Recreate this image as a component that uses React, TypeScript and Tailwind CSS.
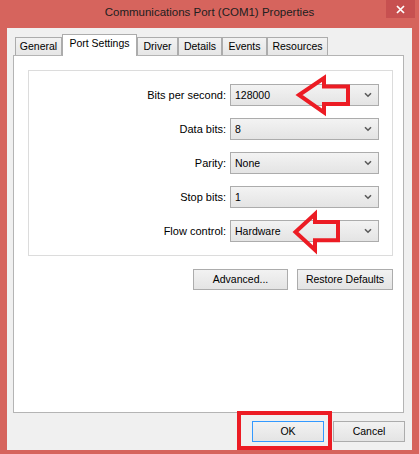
import React from "react";

function Chevron() {
  return (
    <svg width="8" height="6" viewBox="0 0 8 6" className="shrink-0">
      <polyline points="1,1.2 4,4.2 7,1.2" fill="none" stroke="#5a5a5a" strokeWidth="1.6" />
    </svg>
  );
}

function Combo({ value }: { value: string }) {
  return (
    <div className="w-[149px] h-[22px] border border-[#acacac] bg-linear-to-b from-[#f3f3f3] to-[#e4e4e4] flex items-center pl-[4px] pr-[6px] text-[10.5px] text-black">
      <span className="flex-1 leading-none">{value}</span>
      <Chevron />
    </div>
  );
}

function Row({ label, value }: { label: string; value: string }) {
  return (
    <div className="flex items-center h-[22px]">
      <div className="flex-1 text-right pr-[4px] text-[11px] text-black leading-none">{label}</div>
      <Combo value={value} />
    </div>
  );
}

const tabs = [
  { label: "General", cls: "w-[47px]" },
  { label: "Port Settings", cls: "w-[75px]", sel: true },
  { label: "Driver", cls: "w-[41px]" },
  { label: "Details", cls: "w-[44px]" },
  { label: "Events", cls: "w-[45px]" },
  { label: "Resources", cls: "w-[61px]" },
];

export default function App() {
  return (
    <div className="relative w-[419px] h-[454px] bg-[#d6645d] flex flex-col font-['Liberation_Sans',Arial,sans-serif] overflow-hidden">
      {/* Title bar */}
      <div className="relative h-[28px] shrink-0 flex items-center justify-center pb-[2px]">
        <span className="text-[11.5px] text-[#202020]">Communications Port (COM1) Properties</span>
        <div className="absolute right-[4px] top-0 w-[29px] h-[18px] bg-[#c75050] flex items-center justify-center">
          <svg width="9" height="9" viewBox="0 0 9 9">
            <path d="M1 1 L8 8 M8 1 L1 8" stroke="#ffffff" strokeWidth="1.7" />
          </svg>
        </div>
      </div>

      {/* Client area */}
      <div className="ml-[7px] w-[405px] h-[422px] bg-[#f0f0f0] pt-[6px] flex flex-col">
        {/* Tab strip */}
        <div className="ml-[8px] h-[21px] flex items-end">
          {tabs.map((t) =>
            t.sel ? (
              <div
                key={t.label}
                className={`${t.cls} h-[22px] -mb-[1px] relative z-10 bg-white border-t border-l border-r border-[#acacac] flex items-center justify-center pb-[3px] text-[10.5px] text-black`}
              >
                {t.label}
              </div>
            ) : (
              <div
                key={t.label}
                className={`${t.cls} h-[18px] bg-linear-to-b from-[#f2f2f2] to-[#e6e6e6] border-t border-l border-r border-[#acacac] flex items-center justify-center text-[10.5px] text-black`}
              >
                {t.label}
              </div>
            )
          )}
        </div>

        {/* Tab pane */}
        <div className="ml-[6px] w-[391px] h-[358px] bg-white border border-[#b4b4b4] flex flex-col">
          <div className="ml-[14px] mt-[14px] w-[365px] h-[186px] border border-[#dcdcdc] pt-[13px] pr-[13px] flex flex-col gap-[12px]">
            <Row label="Bits per second:" value="128000" />
            <Row label="Data bits:" value="8" />
            <Row label="Parity:" value="None" />
            <Row label="Stop bits:" value="1" />
            <Row label="Flow control:" value="Hardware" />
          </div>
          <div className="mt-[13px] pr-[10px] flex justify-end gap-[9px]">
            <button className="w-[95px] h-[21px] border border-[#acacac] bg-linear-to-b from-[#f2f2f2] to-[#e4e4e4] text-[10.5px] text-black">
              Advanced...
            </button>
            <button className="w-[96px] h-[21px] border border-[#acacac] bg-linear-to-b from-[#f2f2f2] to-[#e4e4e4] text-[10.5px] text-black">
              Restore Defaults
            </button>
          </div>
        </div>

        {/* Dialog buttons */}
        <div className="mt-[8px] pr-[7px] flex justify-end gap-[9px]">
          <button className="w-[72px] h-[21px] border border-[#3399ff] bg-linear-to-b from-[#f2f2f2] to-[#e4e4e4] text-[10.5px] text-black">
            OK
          </button>
          <button className="w-[72px] h-[21px] border border-[#acacac] bg-linear-to-b from-[#f2f2f2] to-[#e4e4e4] text-[10.5px] text-black">
            Cancel
          </button>
        </div>
      </div>

      {/* Annotations */}
      <div className="absolute left-[237px] top-[411px] w-[95px] h-[39px] border-4 border-[#ec1c24] pointer-events-none" />
      <svg className="absolute left-0 top-0 pointer-events-none" width="419" height="454" viewBox="0 0 419 454">
        <polygon
          points="299,95 324,78 324,86.5 348,86.5 348,104 324,104 324,112.5"
          fill="none"
          stroke="#ec1c24"
          strokeWidth="4"
        />
        <polygon
          points="295.5,232 315,214 315,222 338,222 338,240.3 315,240.3 315,250"
          fill="none"
          stroke="#ec1c24"
          strokeWidth="4"
        />
      </svg>
    </div>
  );
}
